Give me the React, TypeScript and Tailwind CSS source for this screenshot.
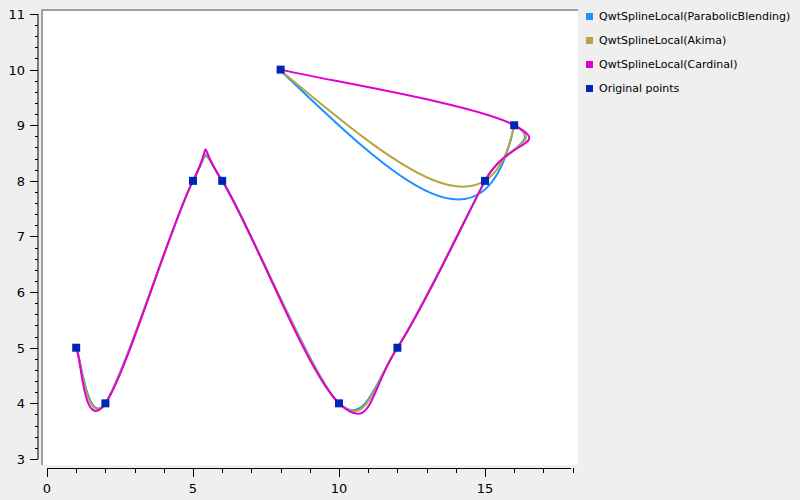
import React from 'react';

const px = (x: number) => 47 + x * 29.2;
const py = (y: number) => 14 + (11 - y) * 55.62;

const pts: [number, number][] = [
  [1, 5], [2, 4], [5, 8], [6, 8], [10, 4], [12, 5], [15, 8], [16, 9], [8, 10],
];

const chain = (k: number, stopBeforeLast: boolean) => {
  const p = pts.map(([x, y]) => [px(x), py(y)]);
  const n = stopBeforeLast ? p.length - 1 : p.length;
  let d = `M${p[0][0]},${p[0][1]}`;
  for (let i = 0; i < n - 1; i++) {
    const a = p[Math.max(i - 1, 0)];
    const b = p[i];
    const c = p[i + 1];
    const e = p[Math.min(i + 2, p.length - 1)];
    const c1 = [b[0] + (c[0] - a[0]) * k, b[1] + (c[1] - a[1]) * k];
    const c2 = [c[0] - (e[0] - b[0]) * k, c[1] - (e[1] - b[1]) * k];
    d += ` C${c1[0]},${c1[1]} ${c2[0]},${c2[1]} ${c[0]},${c[1]}`;
  }
  return d;
};

const legend = [
  { label: 'QwtSplineLocal(ParabolicBlending)', color: '#1e90ff' },
  { label: 'QwtSplineLocal(Akima)', color: '#b5a642' },
  { label: 'QwtSplineLocal(Cardinal)', color: '#e000d0' },
  { label: 'Original points', color: '#0026b8' },
];

export default function App() {
  const yMajor = [3, 4, 5, 6, 7, 8, 9, 10, 11];
  const yMinor: number[] = [];
  for (let v = 3; v < 11; v += 0.2) yMinor.push(v);
  const xTicks: number[] = [];
  for (let v = 0; v <= 18; v++) xTicks.push(v);
  const mag = chain(0.19, false);
  const blue = chain(0.15, true) + ' C485,265 400,185 280,70';
  const olive = chain(0.16, true) + ' C490,245 400,170 280,70';

  return (
    <div className="w-[800px] h-[500px] bg-[#efefef] flex" style={{ fontFamily: '"DejaVu Sans", sans-serif' }}>
      <svg width="580" height="500" className="shrink-0">
        <rect x="41" y="9" width="537" height="456" fill="#fff" />
        <path d="M42,465 V10 H578" stroke="#a0a0a0" strokeWidth="2" fill="none" />
        <line x1="38" y1={py(11)} x2="38" y2={py(3)} stroke="#000" />
        {yMinor.map((v, i) => (
          <line key={i} x1="35" y1={Math.round(py(v)) + 0.5} x2="38" y2={Math.round(py(v)) + 0.5} stroke="#000" />
        ))}
        {yMajor.map((v) => (
          <g key={v}>
            <line x1="30" y1={Math.round(py(v)) + 0.5} x2="38" y2={Math.round(py(v)) + 0.5} stroke="#000" />
            <text x="25" y={py(v) + 5} textAnchor="end" fontSize="13" fill="#000">{v}</text>
          </g>
        ))}
        <line x1={px(0)} y1="468.5" x2="571" y2="468.5" stroke="#000" />
        {xTicks.map((v) => (
          <line key={v} x1={Math.round(px(v)) + 0.5} y1="468" x2={Math.round(px(v)) + 0.5} y2={v % 5 === 0 ? 477 : 473} stroke="#000" />
        ))}
        {[0, 5, 10, 15].map((v) => (
          <text key={v} x={px(v)} y="493" textAnchor="middle" fontSize="13" fill="#000">{v}</text>
        ))}
        <path d={blue} stroke="#1e90ff" strokeWidth="2" fill="none" />
        <path d={olive} stroke="#b5a642" strokeWidth="2" fill="none" />
        <path d={mag} stroke="#e000d0" strokeWidth="2" fill="none" />
        {pts.map(([x, y], i) => (
          <rect key={i} x={px(x) - 4} y={py(y) - 4} width="8" height="8" fill="#0026b8" />
        ))}
      </svg>
      <div className="flex flex-col pt-[10px] pl-[6px] gap-[11px]">
        {legend.map((l) => (
          <div key={l.label} className="flex items-center gap-[6px] h-[13px]">
            <span className="w-[7px] h-[7px]" style={{ backgroundColor: l.color }} />
            <span className="text-[11px] text-black leading-none">{l.label}</span>
          </div>
        ))}
      </div>
    </div>
  );
}
